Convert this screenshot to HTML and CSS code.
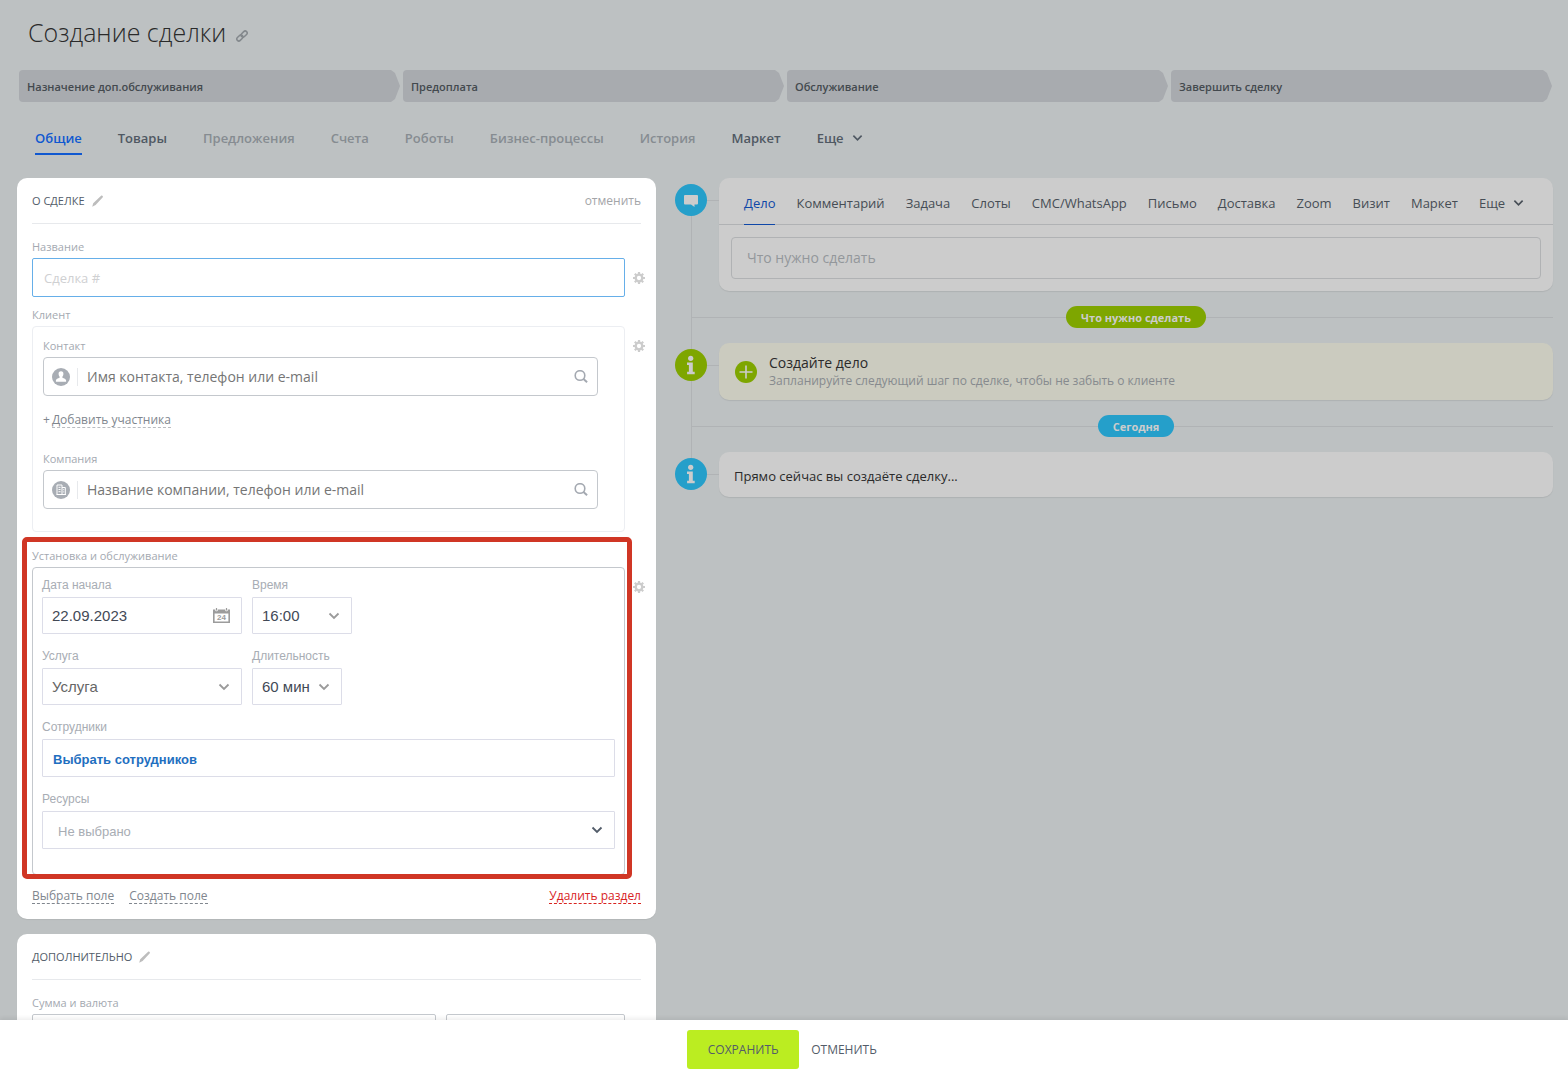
FILE: index.html
```html
<!DOCTYPE html>
<html lang="ru">
<head>
<meta charset="utf-8">
<meta name="viewport" content="width=device-width, initial-scale=1">
<title>Создание сделки</title>
<link rel="stylesheet" href="styles.css">
</head>
<body>
<svg class="sprite" aria-hidden="true">
  <symbol id="i-chevron" viewBox="0 0 12 8"><path d="M1.500 1.500 6 6l4.500-4.500" fill="none" stroke="currentColor" stroke-width="1.800"/></symbol>
  <symbol id="i-gear" viewBox="0 0 12 12">
    <circle cx="6" cy="6" r="3.300" fill="none" stroke="currentColor" stroke-width="2.300"/>
    <path d="M6 0v2.200M6 9.800V12M0 6h2.200M9.800 6H12M1.800 1.800l1.500 1.500M8.700 8.700l1.500 1.500M1.800 10.200l1.500-1.500M8.700 3.300l1.500-1.500" stroke="currentColor" stroke-width="2.200"/>
  </symbol>
  <symbol id="i-pencil" viewBox="0 0 12 12"><path d="M1.200 8.300 8.300 1.500 9.400.6q.8-.3 1.300.3t.1 1.300L3.600 9.900.2 11.800z" fill="currentColor"/></symbol>
  <symbol id="i-search" viewBox="0 0 14 14"><circle cx="6" cy="5.500" r="4.800" fill="none" stroke="currentColor" stroke-width="1.600"/><path d="m9.500 9 3.600 3.200" stroke="currentColor" stroke-width="2"/></symbol>
  <symbol id="i-info" viewBox="0 0 32 32"><circle cx="15.700" cy="9.300" r="2.600" fill="currentColor"/><path d="M12 13.500h5.800v9.300h1.900v2.500h-7.600v-2.500h1.800V16H12z" fill="currentColor"/></symbol>
</svg>

<div class="page">
  <header class="page-head">
    <h1>Создание сделки</h1>
    <button class="icon-btn link-btn" type="button" aria-label="Скопировать ссылку">
      <svg width="12" height="12" viewBox="0 0 12 12" fill="none" stroke="currentColor" stroke-width="1.500"><rect x="4.600" y="2.100" width="7" height="4" rx="2" transform="rotate(-45 8.100 4.100)"/><rect x=".4" y="5.900" width="7" height="4" rx="2" transform="rotate(-45 3.900 7.900)"/></svg>
    </button>
  </header>

  <ol class="stages">
    <li><button type="button">Назначение доп.обслуживания</button></li>
    <li><button type="button">Предоплата</button></li>
    <li><button type="button">Обслуживание</button></li>
    <li><button type="button">Завершить сделку</button></li>
  </ol>

  <nav class="tabs" aria-label="Разделы сделки">
    <a class="tab tab-active" href="#general">Общие</a>
    <a class="tab" href="#products">Товары</a>
    <a class="tab tab-muted" href="#quotes">Предложения</a>
    <a class="tab tab-muted" href="#invoices">Счета</a>
    <a class="tab tab-muted" href="#robots">Роботы</a>
    <a class="tab tab-muted" href="#processes">Бизнес-процессы</a>
    <a class="tab tab-muted" href="#history">История</a>
    <a class="tab" href="#market">Маркет</a>
    <button class="tab tab-more" type="button">Еще <svg width="11" height="8"><use href="#i-chevron"/></svg></button>
  </nav>

  <main class="columns">
    <div class="forms">
      <section class="panel">
        <div class="panel-head">
          <h2>О сделке</h2>
          <button class="icon-btn pencil" type="button" aria-label="Переименовать раздел"><svg width="12" height="12"><use href="#i-pencil"/></svg></button>
          <button class="head-cancel" type="button">отменить</button>
        </div>

        <div class="field field-name">
          <label class="label" for="name">Название</label>
          <input class="input input-focus" id="name" type="text" placeholder="Сделка #">
          <button class="icon-btn gear" type="button" aria-label="Настройки поля"><svg width="12" height="12"><use href="#i-gear"/></svg></button>
        </div>

        <div class="field field-client">
          <span class="label">Клиент</span>
          <div class="box">
            <label class="label" for="contact">Контакт</label>
            <div class="lookup">
              <svg width="18" height="18" viewBox="0 0 18 18"><circle cx="9" cy="9" r="9" fill="#a8adb4"/><path d="M9 3.200c1.700 0 2.500 1.100 2.400 2.700 0 1.300-.5 2-1 2.700v1.200c1.800.8 3.500 1.200 3.700 2.500v1.400H3.900v-1.400c.2-1.300 1.900-1.700 3.700-2.500V8.600c-.5-.7-1-1.400-1-2.700C6.500 4.300 7.300 3.200 9 3.200z" fill="#fff"/></svg>
              <input id="contact" type="text" placeholder="Имя контакта, телефон или e-mail">
              <svg class="search" width="14" height="14"><use href="#i-search"/></svg>
            </div>
            <div class="add-row">+<a class="dashed" href="#add">Добавить участника</a></div>
            <label class="label" for="company">Компания</label>
            <div class="lookup">
              <svg width="18" height="18" viewBox="0 0 18 18"><circle cx="9" cy="9" r="9" fill="#a8adb4"/><path d="M5 13.500V4h5v9.500M10 6.500h3.300v7M4.500 13.500h9.500M6.500 6.300h2M6.500 8.500h2M6.500 10.700h2M11.200 8.700h1M11.200 10.900h1" fill="none" stroke="#fff"/></svg>
              <input id="company" type="text" placeholder="Название компании, телефон или e-mail">
              <svg class="search" width="14" height="14"><use href="#i-search"/></svg>
            </div>
          </div>
          <button class="icon-btn gear" type="button" aria-label="Настройки поля"><svg width="12" height="12"><use href="#i-gear"/></svg></button>
        </div>

        <div class="field field-booking">
          <span class="label">Установка и обслуживание</span>
          <div class="booking">
            <div class="booking-row">
              <div class="cell cell-wide">
                <label for="date">Дата начала</label>
                <div class="control">
                  <input id="date" type="text" value="22.09.2023">
                  <svg class="calendar" width="17" height="16" viewBox="0 0 17 16"><path d="M0 1.500h2.300v1.200q1.200 1.300 2.400 0V1.500h7.600v1.200q1.200 1.300 2.400 0V1.500H17V15H0zM1.600 5.500v8h13.800v-8z" fill="#9c9c9c" fill-rule="evenodd"/><path d="M3.500 0v2.500M13.500 0v2.500" stroke="#9c9c9c" stroke-width="1.200"/><text x="8.500" y="12.200" text-anchor="middle">24</text></svg>
                </div>
              </div>
              <div class="cell cell-time">
                <label for="time">Время</label>
                <div class="control"><select id="time"><option>16:00</option></select><svg class="arrow" width="12" height="8"><use href="#i-chevron"/></svg></div>
              </div>
            </div>
            <div class="booking-row">
              <div class="cell cell-wide">
                <label for="service">Услуга</label>
                <div class="control"><select class="empty" id="service"><option>Услуга</option></select><svg class="arrow" width="12" height="8"><use href="#i-chevron"/></svg></div>
              </div>
              <div class="cell cell-length">
                <label for="length">Длительность</label>
                <div class="control"><select id="length"><option>60 мин</option></select><svg class="arrow" width="12" height="8"><use href="#i-chevron"/></svg></div>
              </div>
            </div>
            <div class="cell">
              <label for="staff">Сотрудники</label>
              <button class="staff" id="staff" type="button">Выбрать сотрудников</button>
            </div>
            <div class="cell">
              <label for="resources">Ресурсы</label>
              <div class="control control-tall"><select id="resources"><option>Не выбрано</option></select><svg class="arrow" width="12" height="8"><use href="#i-chevron"/></svg></div>
            </div>
          </div>
          <button class="icon-btn gear" type="button" aria-label="Настройки поля"><svg width="12" height="12"><use href="#i-gear"/></svg></button>
        </div>

        <div class="panel-links">
          <a class="dashed" href="#select">Выбрать поле</a>
          <a class="dashed" href="#create">Создать поле</a>
          <a class="dashed danger" href="#delete">Удалить раздел</a>
        </div>
      </section>

      <section class="panel">
        <div class="panel-head">
          <h2>Дополнительно</h2>
          <button class="icon-btn pencil" type="button" aria-label="Переименовать раздел"><svg width="12" height="12"><use href="#i-pencil"/></svg></button>
        </div>
        <div class="field field-name">
          <label class="label" for="sum">Сумма и валюта</label>
          <div class="money">
            <input class="input" id="sum" type="text">
            <input class="input" type="text" aria-label="Валюта">
          </div>
        </div>
      </section>
    </div>

    <div class="timeline">
      <div class="entry">
        <span class="badge badge-blue"><svg width="32" height="32" viewBox="0 0 32 32"><path d="M10 11h12q1 0 1 1v7.500q0 1-1 1h-2.500V23L16 20.500h-6q-1 0-1-1V12q0-1 1-1z" fill="currentColor"/></svg></span>
        <div class="card">
          <div class="actions">
            <a class="action action-active" href="#todo">Дело</a>
            <a class="action" href="#comment">Комментарий</a>
            <a class="action" href="#task">Задача</a>
            <a class="action" href="#slots">Слоты</a>
            <a class="action" href="#sms">СМС/WhatsApp</a>
            <a class="action" href="#mail">Письмо</a>
            <a class="action" href="#delivery">Доставка</a>
            <a class="action" href="#zoom">Zoom</a>
            <a class="action" href="#visit">Визит</a>
            <a class="action" href="#apps">Маркет</a>
            <button class="action" type="button">Еще <svg width="11" height="8"><use href="#i-chevron"/></svg></button>
          </div>
          <input class="todo" type="text" aria-label="Что нужно сделать" placeholder="Что нужно сделать">
        </div>
      </div>
      <div class="divider"><span class="pill pill-green">Что нужно сделать</span></div>
      <div class="entry">
        <span class="badge badge-green"><svg width="32" height="32"><use href="#i-info"/></svg></span>
        <div class="card card-hint">
          <button class="icon-btn plus" type="button" aria-label="Создать дело"><svg width="22" height="22" viewBox="0 0 22 22"><circle cx="11" cy="11" r="11" fill="#7ea600"/><path d="M11 4.500v13M4.500 11h13" stroke="#ccc" stroke-width="1.600"/></svg></button>
          <div>
            <p class="hint-title">Создайте дело</p>
            <p class="hint-text">Запланируйте следующий шаг по сделке, чтобы не забыть о клиенте</p>
          </div>
        </div>
      </div>
      <div class="divider"><span class="pill pill-blue">Сегодня</span></div>
      <div class="entry">
        <span class="badge badge-blue"><svg width="32" height="32"><use href="#i-info"/></svg></span>
        <div class="card card-now">Прямо сейчас вы создаёте сделку...</div>
      </div>
    </div>
  </main>
</div>

<footer class="footer">
  <button class="save" type="submit">Сохранить</button>
  <button class="cancel" type="button">Отменить</button>
</footer>
</body>
</html>
```
FILE: styles.css
```css
* { box-sizing: border-box; }

body {
  display: flex;
  flex-direction: column;
  height: 100vh;
  margin: 0;
  background: #bdc1c2;
  color: #525c69;
  font: 12px/18px "Open Sans", "Noto Sans", sans-serif;
}

h1, h2, p, ol { margin: 0; padding: 0; font-weight: 400; }
a { color: inherit; text-decoration: none; }
button, input, select {
  margin: 0;
  padding: 0;
  border: 0;
  border-radius: 0;
  background: none;
  color: inherit;
  font: inherit;
  outline: 0;
}
svg { display: block; flex: none; }
.sprite { position: absolute; width: 0; height: 0; }
.icon-btn { display: block; flex: none; }

.page {
  flex: 1;
  min-height: 0;
  overflow: auto;
  scrollbar-width: none;
}

.page-head {
  display: flex;
  align-items: center;
  gap: 10px;
  padding: 12px 28px 18px;
}
.page-head h1 { color: #2a2a2a; font-size: 25px; font-weight: 300; line-height: 40px; }
.link-btn { padding-top: 8px; color: #83888c; }

/* Stage bar */
.stages {
  display: grid;
  grid-template-columns: repeat(4, 1fr);
  gap: 3px;
  padding: 0 16px 0 19px;
  list-style: none;
}
.stages button {
  display: block;
  width: 100%;
  height: 32px;
  padding: 2px 8px 0;
  border-radius: 4px;
  background: #a8abaf;
  color: #43494e;
  font-size: 11px;
  font-weight: 600;
  text-align: left;
  clip-path: polygon(0 0, calc(100% - 9px) 0, calc(100% - 5px) 3px, 100% 50%, calc(100% - 5px) 29px, calc(100% - 9px) 100%, 0 100%);
}

.tabs { display: flex; gap: 36px; padding: 26px 35px 23px; }
.tab {
  padding-bottom: 5px;
  border-bottom: 2px solid transparent;
  color: #4f5862;
  font-size: 13px;
  font-weight: 600;
  line-height: 20px;
}
.tab-muted { color: #868c91; }
.tab-active { border-color: #1058d0; color: #1058d0; }
.tab-more { display: flex; align-items: center; gap: 8px; }

.columns {
  display: grid;
  grid-template-columns: 639fr 878fr;
  gap: 19px;
  align-items: start;
  padding: 0 15px 0 17px;
}

/* Form panels */
.forms { display: grid; gap: 15px; min-width: 0; }
.panel {
  padding: 0 15px 15px;
  border-radius: 10px;
  background: #fff;
  box-shadow: 0 1px 1px rgba(0, 0, 0, .06);
}
.panel-head {
  display: flex;
  align-items: center;
  height: 46px;
  border-bottom: 1px solid #e7e9ec;
}
.panel-head h2 { font-size: 11px; font-weight: 500; text-transform: uppercase; }
.pencil { margin-left: 7px; color: #bdbdbd; }
.head-cancel { margin-left: auto; color: #a3a5a8; font-size: 12px; }

.field {
  position: relative;
  display: grid;
  grid-template-columns: minmax(0, 1fr) 12px;
  gap: 2px 8px;
  align-items: start;
  margin-right: -4px;
}
.field > .label { grid-column: 1 / -1; }
.field-name { padding-top: 14px; }
.field-client { margin-top: 9px; }
.field-booking { margin-top: 15px; }
.label { display: block; color: #a4a9b1; font-size: 11px; }
.gear { margin-top: 14px; color: #ccc; }

.input {
  width: 100%;
  height: 39px;
  padding: 0 11px;
  border: 1px solid #c4c8cd;
  border-radius: 2px;
  font-size: 13px;
}
.input-focus { border-color: #66afe9; }
.input::placeholder { color: #cfd0d2; }

.box {
  padding: 10px 26px 22px 10px;
  border: 1px solid #eceef2;
  border-radius: 4px;
}
.lookup {
  display: flex;
  align-items: center;
  height: 39px;
  margin-top: 2px;
  padding: 0 9px 0 8px;
  border: 1px solid #c4c8cd;
  border-radius: 4px;
  color: #a4a9b1;
}
.lookup input {
  flex: 1;
  min-width: 0;
  height: 18px;
  margin-left: 7px;
  padding-left: 9px;
  border-left: 1px solid #e7e9ec;
  font-size: 14px;
}
.lookup input::placeholder { color: #757575; }
.add-row { display: flex; gap: 2px; margin: 17px 0 22px; color: #80868e; line-height: 14px; }
.dashed { border-bottom: 1px dashed currentColor; line-height: 14px; }
.add-row .dashed { border-color: #b9bcc1; }

/* Booking field and its highlight frame */
.field-booking::after {
  content: "";
  position: absolute;
  inset: -10px 13px -4px -10px;
  border: 5px solid #d03625;
  border-radius: 5px;
  pointer-events: none;
}
.booking {
  display: grid;
  gap: 13px;
  padding: 8px 9px 25px;
  border: 1px solid #c4c8cd;
  border-radius: 4px;
  color: #424956;
  font-family: "Liberation Sans", Arial, sans-serif;
}
.booking-row { display: flex; gap: 10px; }
.cell { display: grid; gap: 3px; }
.cell label { color: #a8adb4; font-size: 12px; }
.cell-wide { width: 200px; }
.cell-time { width: 100px; }
.cell-length { width: 90px; }
.control { display: grid; align-items: center; }
.control > * { grid-area: 1 / 1; }
.control input, .control select {
  width: 100%;
  height: 37px;
  padding: 0 9px;
  border: 1px solid #dcdde8;
  border-radius: 1px;
  font-size: 15px;
  appearance: none;
}
.control .empty { color: #666; }
.control-tall select { height: 38px; padding: 3px 15px 0; color: #a8adb4; font-size: 13px; }
.arrow { justify-self: end; margin-right: 12px; color: #9a9a9a; pointer-events: none; }
.control-tall .arrow { color: #525c69; }
.calendar { justify-self: end; margin-right: 12px; pointer-events: none; }
.calendar text { fill: #9c9c9c; font: bold 8px "Liberation Sans", Arial, sans-serif; }
.staff {
  height: 38px;
  padding: 4px 10px 0;
  border: 1px solid #dcdde8;
  border-radius: 1px;
  color: #1f6fc0;
  font-size: 13px;
  font-weight: 700;
  text-align: left;
}

.panel-links { display: flex; gap: 15px; margin-top: 14px; color: #80868e; }
.danger { margin-left: auto; color: #d8231f; }
.money { display: grid; grid-template-columns: 404fr 179fr; gap: 10px; }

/* Timeline */
.timeline { position: relative; display: grid; gap: 15px; min-width: 0; }
.timeline::before {
  content: "";
  position: absolute;
  inset: 20px auto 20px 16px;
  border-left: 1px solid #b0b3b5;
}
.entry { display: grid; grid-template-columns: 32px minmax(0, 1fr); gap: 12px; align-items: start; }
.badge {
  position: relative;
  margin-top: 6px;
  border-radius: 50%;
  color: #ccc;
}
.badge::after {
  content: "";
  position: absolute;
  top: 16px;
  left: 100%;
  width: 12px;
  border-top: 1px solid #b0b3b5;
}
.badge-blue, .pill-blue { background: #259fca; }
.badge-green, .pill-green { background: #7ea600; }
.card {
  display: flow-root;
  border-radius: 10px;
  background: #ccc;
  box-shadow: 0 1px 1px rgba(0, 0, 0, .08);
}
.actions {
  display: flex;
  gap: 21px;
  padding: 0 25px;
  border-bottom: 1px solid #b0b2b4;
}
.action {
  margin-bottom: -1px;
  padding-top: 4px;
  border-bottom: 1px solid transparent;
  color: #464d55;
  font-size: 13px;
  line-height: 42px;
  white-space: nowrap;
}
button.action { display: flex; align-items: center; gap: 8px; }
.action-active { border-color: #0f47a8; color: #0f47a8; }
.todo {
  display: block;
  width: calc(100% - 24px);
  height: 42px;
  margin: 12px;
  padding: 0 15px 2px;
  border: 1px solid #b0b2b4;
  border-radius: 4px;
  font-size: 14px;
}
.todo::placeholder { color: #93979b; }

/* The pill is centred over the cards, the line starts at the rail */
.divider {
  display: flex;
  align-items: center;
  margin-left: 16px;
}
.divider::before, .divider::after { content: ""; flex: 1 1 0; border-top: 1px solid #b0b3b5; }
.divider::before { flex-basis: 28px; }
.pill {
  height: 22px;
  padding: 0 15px;
  border-radius: 11px;
  color: #ccc;
  font-size: 11px;
  font-weight: 700;
  line-height: 23px;
}

.card-hint {
  display: flex;
  align-items: center;
  gap: 12px;
  height: 57px;
  padding: 0 16px;
  background: #cbcbbf;
}
.hint-title { color: #2a2a2a; font-size: 14px; line-height: 19px; }
.hint-text { color: #868a8e; }
.card-now { padding: 15px 15px 12px; color: #2a2a2a; font-size: 13px; }

/* Bottom action bar */
.footer {
  display: flex;
  flex: none;
  align-items: center;
  justify-content: center;
  gap: 8px;
  height: 56px;
  padding-top: 2px;
  background: #fff;
  box-shadow: 0 -2px 4px rgba(0, 0, 0, .07);
  z-index: 1;
}
.footer button { height: 39px; padding-top: 1px; color: #535c69; text-transform: uppercase; }
.footer .save { min-width: 112px; border-radius: 3px; background: #bbed21; }
.footer .cancel { padding-inline: 4px; }
```
